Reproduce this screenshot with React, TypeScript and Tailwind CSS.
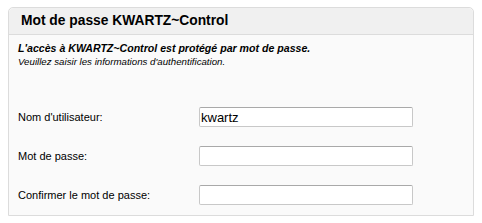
export default function App() {
  const rows = [
    { label: "Nom d'utilisateur:", value: "kwartz", type: "text" },
    { label: "Mot de passe:", value: "", type: "password" },
    { label: "Confirmer le mot de passe:", value: "", type: "password" },
  ];

  return (
    <div className="w-[482px] h-[223px] bg-white pt-[7px] px-[8px] font-['Liberation_Sans',Arial,sans-serif] text-black">
      <div className="w-[466px] h-[209px] border border-[#dcdcdc] rounded-t-[5px] bg-[#fafafa] flex flex-col">
        <div className="h-[27px] bg-[#f0f0f0] border-b border-[#dcdcdc] rounded-t-[5px] flex items-center pl-[12px]">
          <h1 className="text-[13.8px] font-bold leading-none">Mot de passe KWARTZ~Control</h1>
        </div>
        <div className="pl-[9px] pt-[7px] leading-[13px] italic">
          <p className="font-bold text-[10.6px]">L'accès à KWARTZ~Control est protégé par mot de passe.</p>
          <p className="text-[9.7px]">Veuillez saisir les informations d'authentification.</p>
        </div>
        <div className="flex flex-col gap-[19px] pl-[9px] pt-[39px]">
          {rows.map((r) => (
            <div key={r.label} className="flex items-center h-[20px]">
              <label className="w-[181px] text-[11px]">{r.label}</label>
              <input
                type={r.type}
                defaultValue={r.value}
                className="w-[214px] h-[20px] bg-white border border-[#c8c8c8] border-t-[#a9a9a9] rounded-[2px] px-[1px] text-[13px] outline-none"
              />
            </div>
          ))}
        </div>
      </div>
    </div>
  );
}
